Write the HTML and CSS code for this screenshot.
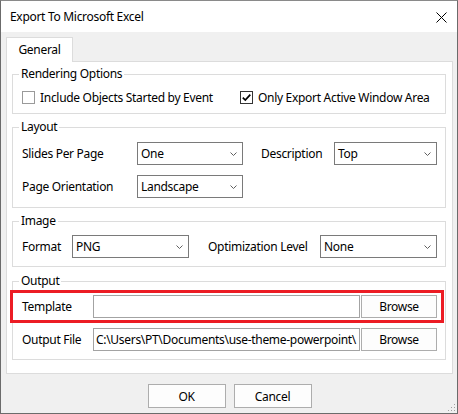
FILE: index.html
```html
<!DOCTYPE html>
<html>
<head>
<meta charset="utf-8">
<link rel="stylesheet" href="styles.css">
</head>
<body>
<div class="window">
  <div class="titlebar">
    <span class="title">Export To Microsoft Excel</span>
    <svg class="close" width="11" height="11" viewBox="0 0 11 11"><path d="M0.5 0.5 L10.5 10.5 M10.5 0.5 L0.5 10.5" stroke="#000" stroke-width="1" fill="none"/></svg>
  </div>
  <div class="body">
    <div class="tabs"><div class="tab">General</div></div>
    <div class="panel">
      <fieldset class="group g-render">
        <legend>Rendering Options</legend>
        <div class="row r-checks">
          <label class="check"><span class="box"></span>Include Objects Started by Event</label>
          <label class="check"><span class="box checked"><svg width="11" height="11" viewBox="0 0 11 11"><path d="M1.8 5.6 L4.3 8.1 L9.3 2.6" stroke="#000" stroke-width="1.7" fill="none"/></svg></span>Only Export Active Window Area</label>
        </div>
      </fieldset>
      <fieldset class="group g-layout">
        <legend>Layout</legend>
        <div class="row r-layout">
          <span class="lbl">Slides Per Page</span>
          <div class="combo"><span>One</span><svg width="7" height="4" viewBox="0 0 7 4"><polyline points="0.5,0.5 3.5,3.5 6.5,0.5" fill="none" stroke="#606060"/></svg></div>
          <span class="lbl pad">Description</span>
          <div class="combo"><span>Top</span><svg width="7" height="4" viewBox="0 0 7 4"><polyline points="0.5,0.5 3.5,3.5 6.5,0.5" fill="none" stroke="#606060"/></svg></div>
        </div>
        <div class="row r-layout second">
          <span class="lbl">Page Orientation</span>
          <div class="combo"><span>Landscape</span><svg width="7" height="4" viewBox="0 0 7 4"><polyline points="0.5,0.5 3.5,3.5 6.5,0.5" fill="none" stroke="#606060"/></svg></div>
        </div>
      </fieldset>
      <fieldset class="group g-image">
        <legend>Image</legend>
        <div class="row r-image">
          <span class="lbl">Format</span>
          <div class="combo"><span>PNG</span><svg width="7" height="4" viewBox="0 0 7 4"><polyline points="0.5,0.5 3.5,3.5 6.5,0.5" fill="none" stroke="#606060"/></svg></div>
          <span class="lbl pad2">Optimization Level</span>
          <div class="combo"><span>None</span><svg width="7" height="4" viewBox="0 0 7 4"><polyline points="0.5,0.5 3.5,3.5 6.5,0.5" fill="none" stroke="#606060"/></svg></div>
        </div>
      </fieldset>
      <fieldset class="group g-output">
        <legend>Output</legend>
        <div class="row r-output highlighted">
          <span class="lbl">Template</span>
          <div class="textbox"></div>
          <button class="btn browse">Browse</button>
          <div class="highlight"></div>
        </div>
        <div class="row r-output second">
          <span class="lbl">Output File</span>
          <div class="textbox"><span>C:\Users\PT\Documents\use-theme-powerpoint\</span></div>
          <button class="btn browse">Browse</button>
        </div>
      </fieldset>
    </div>
    <div class="buttons">
      <button class="btn dlg">OK</button>
      <button class="btn dlg">Cancel</button>
    </div>
  </div>
  <svg class="grip" width="8" height="8" viewBox="0 0 8 8">
    <rect x="6" y="0" width="1" height="1" fill="#a0a0a0"/>
    <rect x="3" y="3" width="1" height="1" fill="#a0a0a0"/>
    <rect x="6" y="3" width="1" height="1" fill="#a0a0a0"/>
    <rect x="0" y="6" width="1" height="1" fill="#a0a0a0"/>
    <rect x="3" y="6" width="1" height="1" fill="#a0a0a0"/>
    <rect x="6" y="6" width="1" height="1" fill="#a0a0a0"/>
  </svg>
</div>
</body>
</html>
```

FILE: styles.css
```css
* { box-sizing: border-box; }
html, body { margin: 0; padding: 0; }
body {
  font-family: "Noto Sans", "Open Sans", sans-serif;
  font-size: 12px;
  letter-spacing: -0.3px;
  color: #000;
  background: #fff;
}
.window {
  position: relative;
  width: 458px;
  height: 414px;
  border: 1px solid #6b6b6b;
  border-top-color: #8a8a8a;
  display: flex;
  flex-direction: column;
  overflow: hidden;
}
.titlebar {
  height: 31px;
  flex: none;
  background: #fff;
  display: flex;
  align-items: center;
  justify-content: space-between;
  padding: 0 10px 0 9px;
}
.title { line-height: 16px; }
.close { display: block; margin-top: 1px; }
.body {
  flex: 1;
  background: #f0f0f0;
  padding: 5px 4px 0 5px;
  display: flex;
  flex-direction: column;
}
.tabs {
  height: 24px;
  display: flex;
}
.tab {
  position: relative;
  z-index: 1;
  width: 67px;
  height: 25px;
  background: #fff;
  border: 1px solid #dcdcdc;
  border-bottom: none;
  display: flex;
  align-items: center;
  justify-content: center;
  padding-bottom: 1px;
}
.panel {
  height: 313px;
  background: #fff;
  border: 1px solid #dcdcdc;
  padding: 5px 6px 0 5px;
  display: flex;
  flex-direction: column;
  gap: 6px;
}
.group {
  margin: 0;
  border: 1px solid #dcdcdc;
  padding: 0 8px 0 9px;
  min-width: 0;
}
.group legend {
  padding: 0 2px;
  margin-left: -3px;
  line-height: 14px;
}
.g-render { padding-top: 6px; padding-bottom: 6px; }
.g-layout { padding-top: 8px; padding-bottom: 9px; }
.g-image { padding-top: 7px; padding-bottom: 8px; margin-top: 0; }
.g-output { padding-top: 7px; padding-bottom: 8px; margin-top: 1px; }

.row {
  display: grid;
  align-items: center;
  height: 23px;
}
.row.second { margin-top: 10px; }
.r-checks { grid-template-columns: 218px 197px; height: 20px; }
.r-layout { grid-template-columns: 115px 106px 91px 103px; }
.r-image { grid-template-columns: 50px 117px 131px 117px; }
.r-output { grid-template-columns: 71px 267px 77px; position: relative; }
.r-output .browse { margin-left: 1px; }

.lbl { white-space: nowrap; line-height: 16px; }
.pad { padding-left: 18px; }
.pad2 { padding-left: 19px; }

.check {
  display: flex;
  align-items: center;
  gap: 5px;
  white-space: nowrap;
}
.box {
  width: 13px;
  height: 13px;
  border: 1px solid #9a9a9a;
  background: #fff;
  flex: none;
  display: flex;
  align-items: center;
  justify-content: center;
}
.box.checked { border-color: #333; }
.box svg { display: block; }

.combo {
  height: 23px;
  background: #fff;
  border: 1px solid #7a7a7a;
  display: flex;
  align-items: center;
  justify-content: space-between;
  padding: 0 5px 0 3px;
  white-space: nowrap;
}
.combo svg { display: block; }
.textbox {
  height: 23px;
  background: #fff;
  border: 1px solid #a3a3a3;
  display: flex;
  align-items: center;
  padding: 0 2px;
  overflow: hidden;
  white-space: nowrap;
}
.btn {
  font: inherit;
  letter-spacing: inherit;
  color: #000;
  background: #fdfdfd;
  border: 1px solid #adadad;
  height: 23px;
  padding: 0;
  margin: 0;
}
.highlight {
  position: absolute;
  left: -12px;
  right: -7px;
  top: -5px;
  bottom: -5px;
  border: 3px solid #ec1c24;
  pointer-events: none;
}
.buttons {
  margin-top: 10px;
  display: flex;
  justify-content: center;
  gap: 8px;
}
.btn.dlg { width: 78px; height: 24px; }
.grip {
  position: absolute;
  right: 1px;
  bottom: 1px;
}
```
